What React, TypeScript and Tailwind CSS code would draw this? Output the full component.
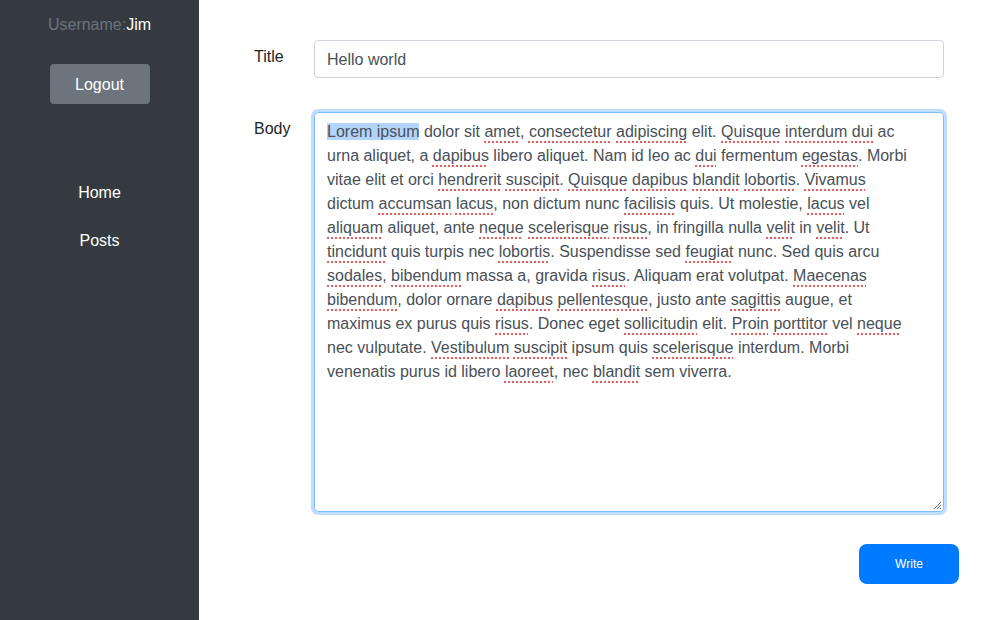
const lines = [
  '[Lorem ipsum] dolor sit ~amet~, ~consectetur~ ~adipiscing~ elit. ~Quisque~ ~interdum~ ~dui~ ac',
  'urna aliquet, a ~dapibus~ libero aliquet. Nam id leo ac ~dui~ fermentum ~egestas~. Morbi',
  'vitae elit et orci ~hendrerit~ ~suscipit~. ~Quisque~ ~dapibus~ ~blandit~ ~lobortis~. ~Vivamus~',
  'dictum ~accumsan~ ~lacus~, non dictum nunc ~facilisis~ quis. Ut molestie, ~lacus~ vel',
  '~aliquam~ aliquet, ante ~neque~ ~scelerisque~ ~risus~, in fringilla nulla ~velit~ in ~velit~. Ut',
  '~tincidunt~ quis turpis nec ~lobortis~. Suspendisse sed ~feugiat~ nunc. Sed quis arcu',
  '~sodales~, ~bibendum~ massa a, gravida ~risus~. Aliquam erat volutpat. ~Maecenas~',
  '~bibendum~, dolor ornare ~dapibus~ ~pellentesque~, justo ante ~sagittis~ augue, et',
  'maximus ex purus quis ~risus~. Donec eget ~sollicitudin~ elit. ~Proin~ ~porttitor~ vel ~neque~',
  'nec vulputate. ~Vestibulum~ ~suscipit~ ipsum quis ~scelerisque~ interdum. Morbi',
  'venenatis purus id libero ~laoreet~, nec ~blandit~ sem viverra.',
];

// ~word~ = spellcheck squiggle, [text] = selected text
function Line({ text }: { text: string }) {
  const parts = text.split(/(~[^~]+~|\[[^\]]+\])/g).filter(Boolean);
  return (
    <div className="whitespace-pre">
      {parts.map((p, i) => {
        if (p.startsWith('~'))
          return (
            <span
              key={i}
              className="underline decoration-dotted decoration-[#f05a5a] decoration-[1.5px] underline-offset-[4px]"
            >
              {p.slice(1, -1)}
            </span>
          );
        if (p.startsWith('['))
          return (
            <span key={i} className="bg-[#b3d4fc]">
              {p.slice(1, -1)}
            </span>
          );
        return <span key={i}>{p}</span>;
      })}
    </div>
  );
}

function Sidebar() {
  return (
    <aside className="flex w-[199px] shrink-0 flex-col items-center bg-[#343a40] pt-[13px]">
      <div className="leading-6">
        <span className="text-[#6c757d]">Username:</span>
        <span className="text-white">Jim</span>
      </div>
      <button
        type="button"
        className="mt-[27px] h-10 w-[100px] rounded-[4px] bg-[#6c757d] pt-[1px] text-white"
      >
        Logout
      </button>
      <nav className="mt-[77px] flex flex-col items-center gap-6 text-white">
        <a className="leading-6">Home</a>
        <a className="leading-6">Posts</a>
      </nav>
    </aside>
  );
}

export default function App() {
  return (
    <div
      className="flex h-[620px] w-[1000px] overflow-hidden bg-white text-[16px]"
      style={{ fontFamily: '"Liberation Sans", Arial, sans-serif' }}
    >
      <Sidebar />

      <main className="flex flex-1 flex-col pl-[55px] pr-[41px] pt-[40px]">
        <div className="flex">
          <label className="w-[60px] pt-[5px] leading-6 text-[#212529]">Title</label>
          <div className="flex h-[38px] w-[630px] items-center rounded-[4px] border border-[#ced4da] px-3 pt-[2px] text-[#495057]">
            Hello world
          </div>
        </div>

        <div className="mt-[34px] flex">
          <label className="w-[60px] pt-[5px] leading-6 text-[#212529]">Body</label>
          <div className="relative h-[400px] w-[630px] rounded-[4px] border border-[#80bdff] px-3 pb-[5px] pt-[7px] leading-6 text-[#495057] shadow-[0_0_0_3px_rgba(0,123,255,0.25)]">
            {lines.map((l, i) => (
              <Line key={i} text={l} />
            ))}
            <svg
              className="absolute bottom-[1px] right-[1px]"
              width="10"
              height="10"
              viewBox="0 0 10 10"
            >
              <path d="M9 2 L2 9 M9 5 L5 9 M9 8 L8 9" stroke="#777" strokeWidth="1" />
            </svg>
          </div>
        </div>

        <div className="mt-[32px] flex justify-end">
          <button
            type="button"
            className="h-10 w-[100px] rounded-[8px] bg-[#007bff] text-[12px] text-white"
          >
            Write
          </button>
        </div>
      </main>
    </div>
  );
}
